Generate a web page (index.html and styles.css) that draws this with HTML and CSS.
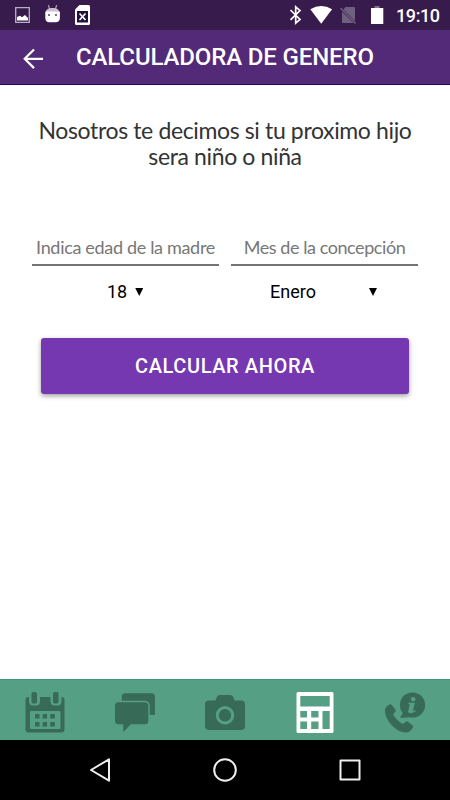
FILE: index.html
```html
<!DOCTYPE html>
<html lang="es">
<head>
<meta charset="utf-8">
<title>Calculadora de genero</title>
<link rel="stylesheet" href="styles.css">
</head>
<body>
<div class="screen">
  <div class="status">
    <svg class="status-left" width="80" height="30" viewBox="12 0 80 30">
      <path fill="none" stroke="#b9afc3" stroke-width="1.3" d="M15.700 7.700h13.600v14.600H15.700z"/>
      <path fill="#fff" d="M17 20.500V17l3-1.300 2 1.500 3-2.200 3 3v2.500z"/>
      <path fill="none" stroke="#a99db5" stroke-width="1.2" d="M48.300 5l1.300 4M56.700 5l-1.300 4"/>
      <path fill="#c9c0d0" d="M46 12c0-3 2.500-4 6.500-4s6.500 1 6.500 4z"/>
      <path fill="#fff" d="M45.300 11.500h14.600V18c0 3-2 4.300-4 4.300h-6.600c-2.300 0-4-1.500-4-4.300z"/>
      <path fill="#807090" d="M48 14h2v2h-2zM55 14h2v2h-2z"/>
      <path fill="#fff" d="M79.500 5H88.500q1.500 0 1.500 1.500v17q0 1.500-1.500 1.500h-12q-1.500 0-1.500-1.500V9.500z"/>
      <path fill="#24103f" d="M77 11h11v11.500H77z"/>
      <path fill="none" stroke="#fff" stroke-width="1.700" d="M79.500 13.500l6 6.500M85.500 13.500l-6 6.500"/>
    </svg>
    <div class="status-right">
      <svg width="96" height="30" viewBox="288 0 96 30">
        <path fill="none" stroke="#fff" stroke-width="1.700" d="M290.500 10l9.500 9.500-4.300 3.700V6.800L300 10.500l-9.500 9.300"/>
        <path fill="#fff" d="M310.300 9.300q11-6.500 21.800 0L321.200 23.700z"/>
        <path fill="#715f80" d="M345.500 7H354q1 0 1 1v13.200L343.500 9.500zM342 11.500L353.500 23H343q-1 0-1-1z"/>
        <path stroke="#715f80" stroke-width="1.500" d="M340.500 8L355.500 23.500"/>
        <path fill="#84758f" d="M374.500 6h5v2h-5z"/>
        <path fill="#fff" d="M371 8h12.300v16H371z"/>
      </svg>
      <span class="clock">19:10</span>
    </div>
  </div>
  <header class="appbar">
    <svg width="22" height="22" viewBox="22 48 22 22"><path fill="none" stroke="#fff" stroke-width="2.200" d="M43 58.800H24.500M34 49.500l-9.300 9.300 9.300 9.300"/></svg>
    <h1 class="title">CALCULADORA DE GENERO</h1>
  </header>
  <main class="content">
    <p class="intro">Nosotros te decimos si tu proximo hijo<br>sera niño o niña</p>
    <div class="fields">
      <div class="field">
        <label class="label">Indica edad de la madre</label>
        <div class="select select-age"><span>18</span><i class="caret"></i></div>
      </div>
      <div class="field">
        <label class="label label-month">Mes de la concepción</label>
        <div class="select select-month"><span>Enero</span><i class="caret"></i></div>
      </div>
    </div>
    <button class="cta">CALCULAR AHORA</button>
  </main>
  <nav class="tabs">
    <svg viewBox="24 691 42 43">
      <path class="ink" d="M28.500 697H61.500q3 0 3 3v29.500q0 3-3 3h-33q-3 0-3-3V700q0-3 3-3z"/>
      <path class="gap" d="M29 695h11v6q0 4.500-4 4.500h-3q-4 0-4-4.500zM50.500 695h11v6q0 4.500-4 4.500h-3q-4 0-4-4.500z"/>
      <rect class="ink" x="31.500" y="692" width="5.500" height="11.500" rx="1.800"/><rect class="ink" x="53" y="692" width="5.500" height="11.500" rx="1.800"/>
      <rect class="gap" x="30" y="711" width="30.500" height="18" rx="1.200"/>
      <path class="ink" d="M35 714h4.500v4.500H35zM42.600 714h4.500v4.500h-4.500zM50.300 714h4.500v4.500h-4.500zM35 722h4.500v4.500H35zM42.600 722h4.500v4.500h-4.500zM50.300 722h4.500v4.500h-4.500z"/>
    </svg>
    <svg viewBox="114 691 42 43">
      <path class="ink" d="M125 693.300h26.500q3.500 0 3.500 3.500V715H121.800v-18.200q0-3.500 3.200-3.500z"/>
      <rect class="gap" x="113.500" y="700.800" width="36.300" height="25" rx="5"/>
      <path class="ink" d="M118.500 702.300h26.300q3.500 0 3.500 3.500v15q0 3.500-3.500 3.500h-14l-7.500 7.800v-7.800h-4.800q-3.500 0-3.500-3.500v-15q0-3.500 3.500-3.500z"/>
    </svg>
    <svg viewBox="204 691 42 43">
      <path class="ink" d="M209 700.500h6.500l1.300-3.500q.8-2 3-2h10.400q2.200 0 3 2l1.300 3.500h6.500q4 0 4 4V726q0 4-4 4h-32q-4 0-4-4v-21.500q0-4 4-4z"/>
      <circle class="ring" cx="225" cy="715.300" r="7.700"/>
    </svg>
    <svg viewBox="294 691 42 43">
      <path fill="#fff" fill-rule="evenodd" d="M298 692h34q1.500 0 1.500 1.500v38q0 1.500-1.500 1.500h-34q-1.500 0-1.500-1.500v-38q0-1.500 1.500-1.500zM300.300 696v10.500H329.700V696zM300.300 711v6.500h6.700V711zM311.200 711v6.500h7.300V711zM322.500 711v18h7.200v-18zM300.300 721.500v7.500h6.700v-7.500zM311.200 721.500v7.500h7.300v-7.500z"/>
    </svg>
    <svg viewBox="384 691 42 43">
      <path class="ink" d="M385.200 708.500q1.300-2.700 4-4.100 1.300-.7 2.300.4l3.800 4.700q1 1.400-.2 2.500l-2 2.200q3.100 6.400 9.900 9.800l2.400-2q1.300-1.200 2.600-.2l4.400 3.500q1.200 1 .4 2.300-1.700 3.700-5 4.600-7.500 1.500-15.500-6.400-8.500-8.500-7.100-17.300z"/>
      <circle class="ink" cx="412.500" cy="705" r="12.600"/>
      <path class="ink" d="M403.500 712l-3.500 5.500q5.500 1 10-.800z"/>
      <circle class="gap" cx="413.200" cy="699.200" r="2.200"/>
      <path class="gap" d="M408.600 702.700h6.300l-2 8q0 .8 2.600-.6l.3 1q-3.500 2.300-5.600 2.200-2.300-.2-1.900-2.600l1.500-6.400h-1.500z"/>
    </svg>
  </nav>
  <footer class="system">
    <svg viewBox="80 740 290 60" width="290" height="60">
      <g fill="none" stroke="#eee" stroke-width="2" stroke-linejoin="round">
        <path d="M109 759.300v21.400l-18-10.700z"/><circle cx="225" cy="770" r="10.800"/><path d="M340.500 760.500h19v19h-19z"/>
      </g>
    </svg>
  </footer>
</div>
</body>
</html>
```

FILE: styles.css
```css
* { box-sizing: border-box; }
body { margin: 0; font-family: Roboto, sans-serif; }
.screen { width: 450px; height: 800px; display: flex; flex-direction: column; background: #fff; overflow: hidden; }
.status { height: 30px; background: #361b4c; display: flex; justify-content: space-between; padding: 0 10px 0 12px; color: #fff; }
.status-right { display: flex; align-items: center; gap: 12px; }
.clock { font-size: 18px; line-height: 30px; padding-top: 2px; font-weight: 500; letter-spacing: -.4px; width: 44px; white-space: nowrap; }
.status svg { display: block; }
.appbar { height: 55px; background: #532a78; border-bottom: 1px solid #2c0560; display: flex; align-items: center; padding: 4px 0 0 22px; gap: 32px; }
.title { margin: 0 0 5px; color: #fff; font-size: 24px; font-weight: 500; line-height: 28px; letter-spacing: -.14px; white-space: nowrap; }
.content { flex: 1; display: flex; flex-direction: column; padding: 32px 32px 0; }
.intro { margin: 0; font: 23px/26px Lato, sans-serif; letter-spacing: -.37px; color: #333; text-align: center; white-space: nowrap; }
.fields { display: grid; grid-template-columns: 187px 187px; gap: 12px; margin-top: 65px; }
.label { display: block; height: 32px; border-bottom: 2px solid #757575; font: 18px/26px Lato, sans-serif; letter-spacing: -.32px; color: #777; text-align: center; white-space: nowrap; }
.label-month { letter-spacing: -.43px; }
.select { display: flex; align-items: center; margin-top: 15px; height: 22px; font-size: 18px; line-height: 22px; color: #000; }
.select-age { padding-left: 75px; gap: 8px; }
.select-month { padding: 0 41px 0 39px; justify-content: space-between; }
.caret { width: 8px; height: 8px; background: #000; clip-path: polygon(0 0, 100% 0, 50% 100%); }
.cta { width: 368px; height: 56px; margin: 35px 0 0 9px; border: 0; border-radius: 3px; background: #7538b0; box-shadow: 0 2px 5px rgba(0,0,0,.38); color: #fff; font: 500 20px/56px Roboto, sans-serif; letter-spacing: .6px; padding: 0; }
.tabs { height: 61px; background: #559f85; border-top: 1px solid #3e9678; display: grid; grid-template-columns: repeat(5, 90px); place-items: center; padding-top: 5px; }
.tabs svg { width: 42px; height: 43px; display: block; }
.ink { fill: #376a57; }
.gap { fill: #559f85; }
.ring { fill: none; stroke: #559f85; stroke-width: 3; }
.system { height: 60px; background: #000; display: flex; justify-content: center; }
```
